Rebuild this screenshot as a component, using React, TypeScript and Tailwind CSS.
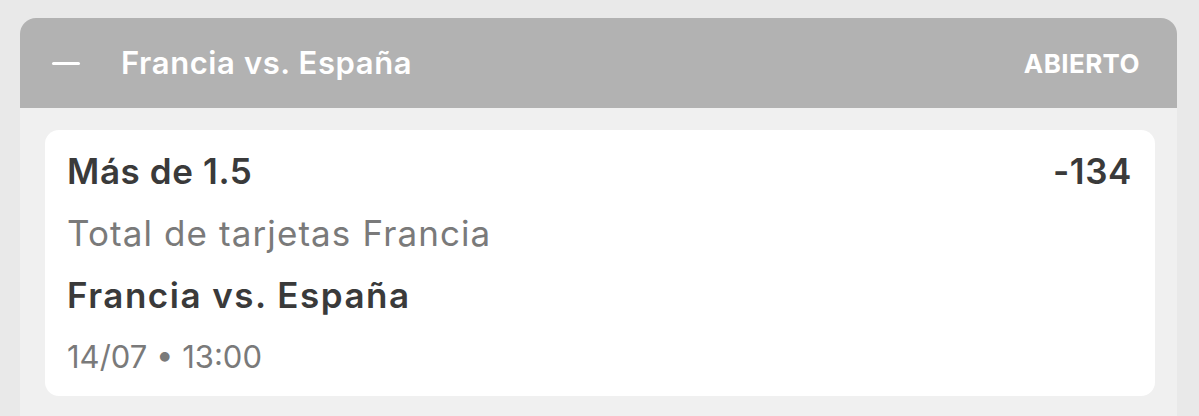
export default function App() {
  return (
    <div
      className="min-h-[416px] bg-[#e9e9e9] pt-[18px] pl-[20px] pr-[22px]"
      style={{ fontFamily: "Inter, 'Noto Sans', sans-serif" }}
    >
      <div className="rounded-t-[16px] overflow-hidden bg-[#f0f0f0] pb-[20px]">
        {/* header */}
        <div className="h-[90px] bg-[#b2b2b2] flex items-center pl-[32px] pr-[37px]">
          <span className="block w-[28px] h-[3px] bg-white rounded-full"></span>
          <span className="ml-[41px] text-[31px] font-semibold tracking-[0.6px] text-white">Francia vs. España</span>
          <span className="ml-auto text-[26px] font-bold tracking-[0.4px] text-white">ABIERTO</span>
        </div>

        {/* selección */}
        <div className="pt-[22px] pl-[25px] pr-[22px]">
          <div className="bg-white rounded-[14px] pl-[22px] pr-[23px] pt-[10px] pb-[8px] leading-[62px]">
            <div className="flex justify-between text-[35px] font-semibold tracking-[0.6px] text-[#3a3a3a]">
              <span>Más de 1.5</span>
              <span>-134</span>
            </div>
            <div className="text-[35px] tracking-[1.1px] text-[#7a7a7a]">Total de tarjetas Francia</div>
            <div className="text-[35px] font-semibold tracking-[1.5px] text-[#3a3a3a]">Francia vs. España</div>
            <div className="text-[31px] text-[#7a7a7a]">14/07 • 13:00</div>
          </div>
        </div>
      </div>
    </div>
  );
}
